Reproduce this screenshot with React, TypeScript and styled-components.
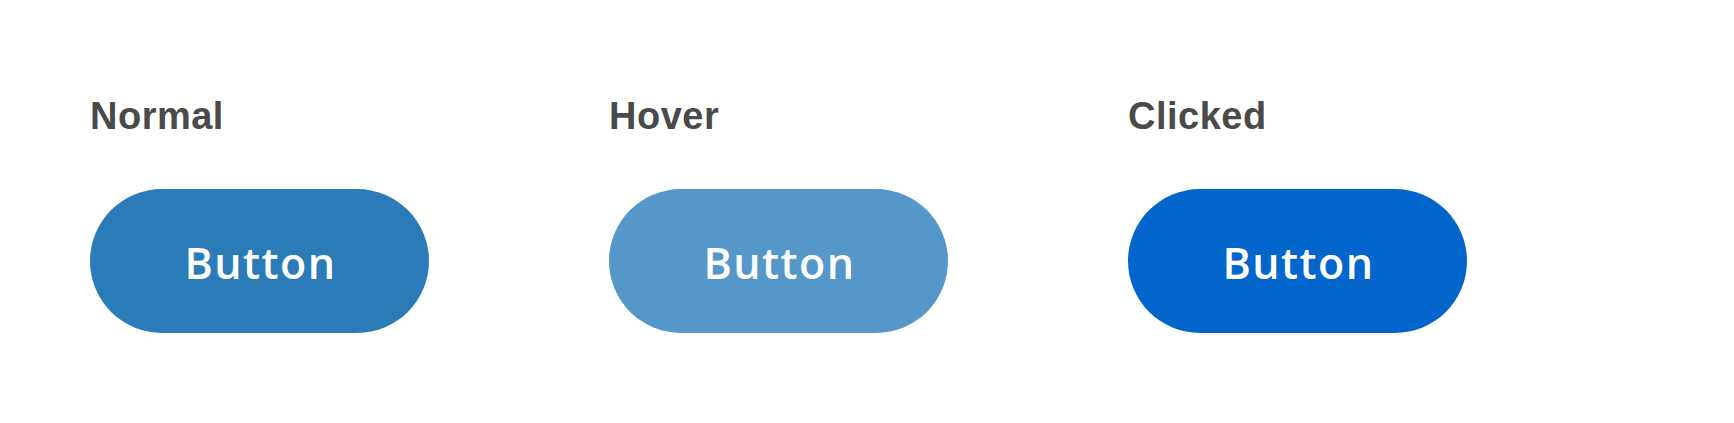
import React from 'react';
import styled, { createGlobalStyle } from 'styled-components';

const GlobalStyle = createGlobalStyle`
  html, body {
    margin: 0;
    padding: 0;
    background: #ffffff;
  }
`;

const Page = styled.div`
  width: 1734px;
  height: 423px;
  box-sizing: border-box;
  padding: 97px 0 0 90px;
  display: flex;
  gap: 180px;
  background: #ffffff;
`;

const StateColumn = styled.div`
  display: flex;
  flex-direction: column;
  gap: 54px;
  width: 339px;
`;

const StateLabel = styled.h2`
  margin: 0;
  font-family: 'Liberation Sans', Arial, sans-serif;
  font-weight: 700;
  font-size: 38px;
  line-height: 38px;
  letter-spacing: 0.5px;
  color: #4a4a4a;
`;

const PillButton = styled.button<{ bg: string }>`
  width: 339px;
  height: 144px;
  border: none;
  border-radius: 72px;
  background: ${props => props.bg};
  color: #ffffff;
  font-family: 'Open Sans', sans-serif;
  font-weight: 600;
  font-size: 43px;
  letter-spacing: 1.5px;
  display: flex;
  align-items: center;
  justify-content: center;
  padding: 2px 0 0 2px;
  cursor: pointer;
`;

const states = [
  { label: 'Normal', bg: '#2c7bb9' },
  { label: 'Hover', bg: '#5597c9' },
  { label: 'Clicked', bg: '#0366cc' },
];

const App: React.FC = () => {
  return (
    <>
      <GlobalStyle />
      <Page>
        {states.map(s => (
          <StateColumn key={s.label}>
            <StateLabel>{s.label}</StateLabel>
            <PillButton bg={s.bg}>Button</PillButton>
          </StateColumn>
        ))}
      </Page>
    </>
  );
};

export default App;
